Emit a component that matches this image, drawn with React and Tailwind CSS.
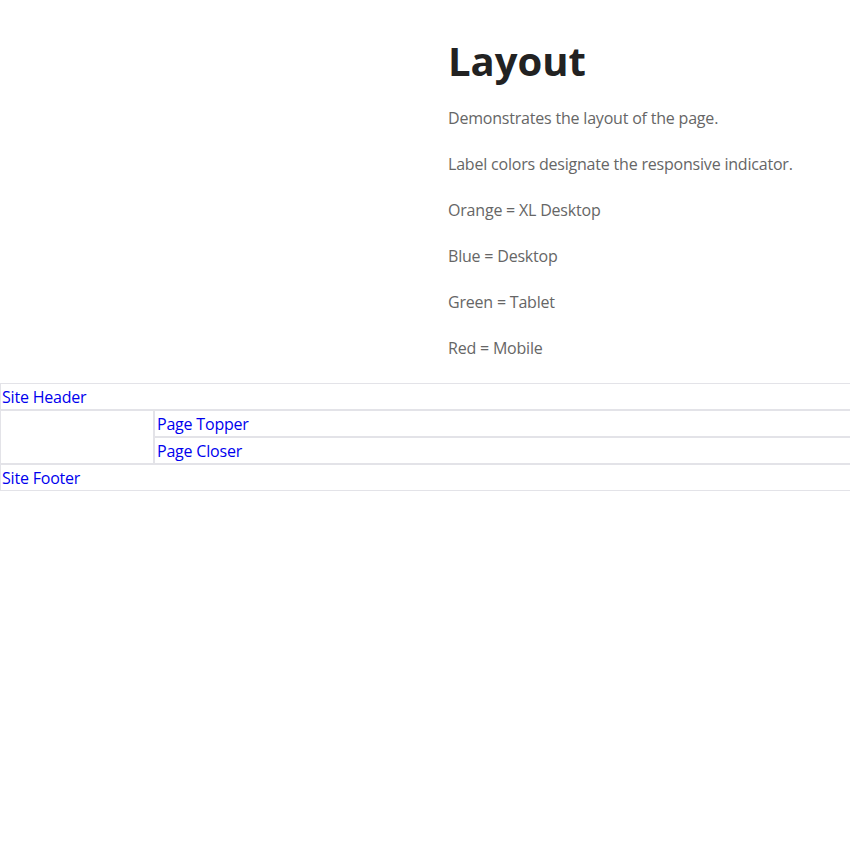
import React from "react";

const lines = [
    "Demonstrates the layout of the page.",
    "Label colors designate the responsive indicator.",
    "Orange = XL Desktop",
    "Blue = Desktop",
    "Green = Tablet",
    "Red = Mobile",
];

function Region({ label, className = "" }) {
    return (
        <div className={`border border-r-0 border-[#e3e3e8] leading-6 pt-px tracking-[-0.2px] ${className}`}>
            <a href="#" className="text-[#0000ee]">
                {label}
            </a>
        </div>
    );
}

export default function App() {
    return (
        <div className="min-h-[843px] bg-white font-['Open_Sans',sans-serif] text-base">
            {/* Intro */}
            <div className="flex pt-[36px] pb-px">
                <div className="w-[448px] shrink-0" />
                <div>
                    <h1 className="text-[40px] font-bold leading-[50px] text-[#222] mb-[20px]">
                        Layout
                    </h1>
                    {lines.map((line) => (
                        <p key={line} className="leading-6 mb-[22px] text-[#666] tracking-[-0.2px]">
                            {line}
                        </p>
                    ))}
                </div>
            </div>

            {/* Layout regions */}
            <Region label="Site Header" className="pl-px" />
            <div className="flex">
                <div className="w-[154px] shrink-0 border border-[#e3e3e8]" />
                <div className="flex-1">
                    <Region label="Page Topper" className="pl-[2px]" />
                    <Region label="Page Closer" className="pl-[2px]" />
                </div>
            </div>
            <Region label="Site Footer" className="pl-px" />
        </div>
    );
}
